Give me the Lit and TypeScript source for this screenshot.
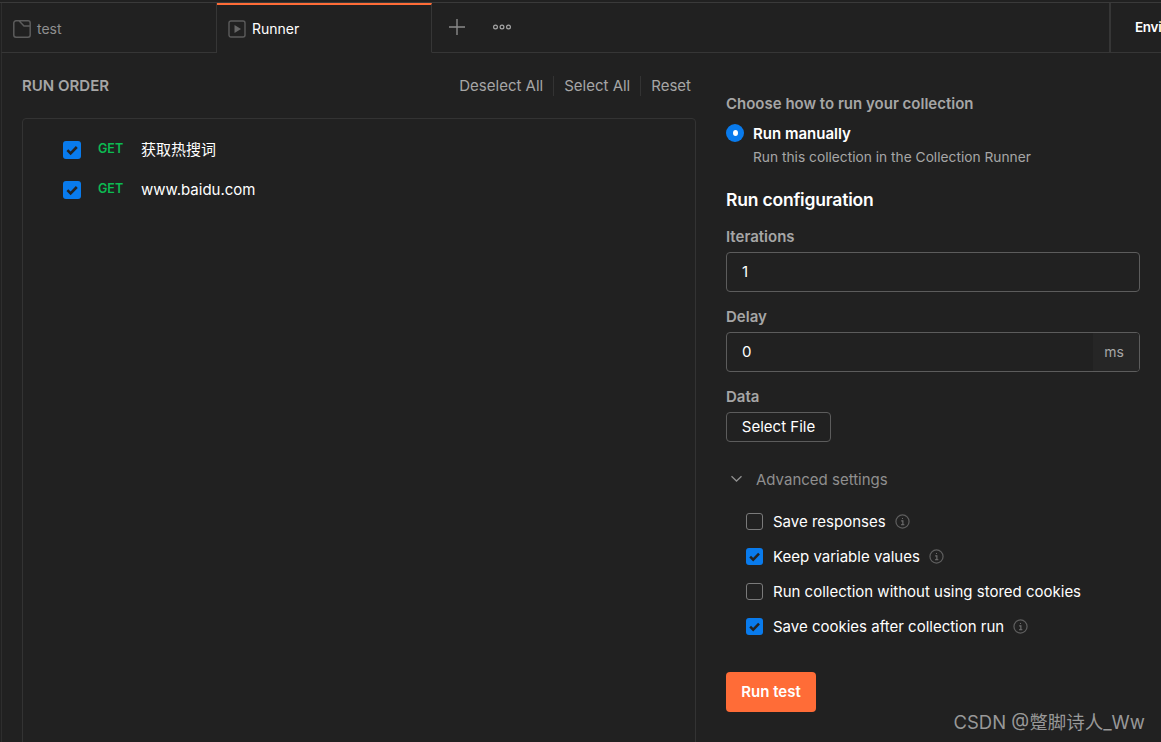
import { LitElement, html, css } from "lit";
import { customElement } from "lit/decorators.js";

const check = html`<svg viewBox="0 0 18 18" width="18" height="18"><path d="M4.4 9.2 7.6 12.4 13.8 6" fill="none" stroke="#232323" stroke-width="2.6"/></svg>`;
const info = html`<svg class="info" viewBox="0 0 16 16" width="15" height="15"><circle cx="8" cy="8" r="7" fill="none" stroke="#5e5e5e" stroke-width="1.3"/><path d="M6.6 7.3H8.4V11.2M6.4 11.4H10M7.5 4.8H8.5" fill="none" stroke="#707070" stroke-width="1.2"/></svg>`;

@customElement("app-root")
export class AppRoot extends LitElement {
  static styles = css`
    :host {
      display: block;
      width: 1161px;
      height: 742px;
      overflow: hidden;
      position: relative;
      background: #212121;
      color: #fff;
      font-family: Inter, "Noto Sans CJK SC", sans-serif;
      font-size: 15px;
      box-sizing: border-box;
      padding-top: 2px;
    }
    .topline { height: 1px; background: #3a3a3a; }
    .tabs {
      display: flex;
      height: 50px;
      box-sizing: border-box;
      padding-left: 1px;
    }
    .tab {
      display: flex;
      align-items: center;
      gap: 6px;
      box-sizing: border-box;
      height: 50px;
      border-bottom: 1px solid #363636;
      border-right: 1px solid #363636;
      padding-top: 3px;
      color: #8f8f8f;
      font-size: 14px;
      flex: none;
    }
    .tab svg { flex: none; }
    .tab span { padding-bottom: 2px; }
    .tab.first { width: 216px; padding-left: 11px; border-left: 1px solid #2e2e2e; }
    .tab.active {
      width: 215px;
      padding-left: 11px;
      color: #fff;
      border-bottom-color: transparent;
      border-top: 2px solid #ff6c37;
      padding-top: 1px;
    }
    .rest {
      flex: 1;
      display: flex;
      align-items: center;
      height: 50px;
      box-sizing: border-box;
      border-bottom: 1px solid #363636;
      padding-bottom: 1px;
    }
    .plus { margin-left: 17px; flex: none; }
    .dots { margin-left: 28px; flex: none; }
    .env {
      margin-left: auto;
      width: 52px;
      height: 49px;
      margin-bottom: -1px;
      box-sizing: border-box;
      border-left: 2px solid #363636;
      padding-left: 24px;
      padding-bottom: 2px;
      display: flex;
      align-items: center;
      font-weight: 600;
      font-size: 13.5px;
      letter-spacing: -0.3px;
      white-space: nowrap;
      flex: none;
    }
    .body {
      display: flex;
      height: 689px;
      margin-left: 1px;
      border-left: 1px solid #2e2e2e;
      box-sizing: border-box;
    }
    .left {
      width: 674px;
      margin-left: 20px;
      display: flex;
      flex-direction: column;
      flex: none;
    }
    .left-head {
      height: 65px;
      flex: none;
      display: flex;
      align-items: center;
      justify-content: space-between;
      box-sizing: border-box;
      padding-top: 1px;
    }
    .title { font-size: 15px; font-weight: 600; color: #a6a6a6; margin-bottom: 2px; }
    .actions { display: flex; align-items: center; color: #a6a6a6; font-size: 15px; }
    .actions span { padding: 0 10px; border-right: 1px solid #333; line-height: 20px; }
    .actions span:first-child { padding-left: 0; }
    .actions span:last-child { border: none; padding-right: 5px; }
    .card {
      height: 700px;
      flex: none;
      box-sizing: border-box;
      border: 1px solid #333;
      border-radius: 4px;
      padding: 11px 0 0 40px;
    }
    .row { display: flex; align-items: center; height: 40px; }
    .method {
      color: #0cbb52;
      font-size: 12.5px;
      font-weight: 600;
      width: 43px;
      margin-left: 17px;
      position: relative;
      top: -2px;
    }
    .name { font-size: 15px; padding-bottom: 2px; }
    .name.cjk { padding-bottom: 4px; }
    .right {
      width: 414px;
      margin-left: 30px;
      flex: none;
      padding-top: 41px;
      box-sizing: border-box;
    }
    .label { font-size: 15px; font-weight: 600; color: #a6a6a6; line-height: 20px; height: 20px; }
    .radio { display: flex; align-items: center; gap: 9px; margin-top: 9px; height: 20px; font-weight: 600; }
    .dot {
      width: 18px; height: 18px; border-radius: 50%; background: #097bed;
      display: flex; align-items: center; justify-content: center; flex: none;
    }
    .dot i { width: 5px; height: 6px; border-radius: 50%; background: #fff; display: block; }
    .sub { margin: 4px 0 0 27px; color: #a6a6a6; line-height: 20px; font-size: 13.75px; }
    h2 { margin: 21px 0 0; font-size: 17.5px; font-weight: 600; line-height: 24px; letter-spacing: -0.2px; }
    .lab-it { margin-top: 15px; }
    .field {
      margin-top: 5px;
      height: 40px;
      box-sizing: border-box;
      border: 1px solid #5c5c5c;
      border-radius: 4px;
      display: flex;
      align-items: center;
      padding-left: 15px;
      font-size: 15px;
      color: #fff;
      overflow: hidden;
    }
    .val { flex: 1; padding-bottom: 2px; }
    .unit {
      align-self: stretch;
      width: 46px;
      box-sizing: border-box;
      padding-right: 4px;
      padding-bottom: 1px;
      background: #262626;
      color: #a6a6a6;
      display: flex;
      align-items: center;
      justify-content: center;
      font-size: 14px;
    }
    .lab-gap { margin-top: 15px; }
    .file {
      margin-top: 5px;
      width: 105px;
      height: 30px;
      box-sizing: border-box;
      border: 1px solid #5c5c5c;
      border-radius: 4px;
      display: flex;
      align-items: center;
      justify-content: center;
      padding-bottom: 1px;
      font-size: 15px;
      color: #fff;
    }
    .adv {
      display: flex; align-items: center; gap: 13px;
      margin-top: 27px; height: 20px; color: #8f8f8f; font-size: 15px; padding-left: 4px;
    }
    .checks { margin: 15px 0 0 20px; }
    .opt { display: flex; align-items: center; height: 35px; font-size: 15px; }
    .box {
      width: 17px; height: 17px; box-sizing: border-box; border: 1px solid #7a7a7a; border-radius: 3px; flex: none; margin-right: 10px;
    }
    .cb { width: 18px; height: 18px; background: #097bed; border-radius: 3px; flex: none; display: block; }
    .opt .cb { width: 17px; height: 17px; margin-right: 10px; }
    .opt .cb svg { width: 17px; height: 17px; display: block; }
    .cb svg { display: block; }
    .info { margin-left: 9px; flex: none; }
    .run {
      margin-top: 28px;
      width: 90px;
      height: 40px;
      box-sizing: border-box;
      padding-bottom: 1px;
      border-radius: 4px;
      background: #ff6c37;
      display: flex;
      align-items: center;
      justify-content: center;
      font-weight: 600;
      font-size: 15px;
      color: #fff;
    }
    .mark {
      position: absolute;
      right: 16px;
      top: 709px;
      font-size: 18.5px;
      line-height: 26px;
      color: rgba(200, 200, 200, 0.72);
      white-space: nowrap;
    }
  `;

  render() {
    return html`
      <div class="topline"></div>
      <div class="tabs">
        <div class="tab first">
          <svg width="18" height="18" viewBox="1 1 18 18"><path d="M7 1.8 12 7 H18 M4 1.8H16A2.2 2.2 0 0 1 18.2 4V16A2.2 2.2 0 0 1 16 18.2H4A2.2 2.2 0 0 1 1.8 16V4A2.2 2.2 0 0 1 4 1.8Z" fill="none" stroke="#5c5c5c" stroke-width="1.5"/></svg>
          <span>test</span>
        </div>
        <div class="tab active">
          <svg width="18" height="18" viewBox="0 0 18 18"><rect x="1" y="1" width="16" height="16" rx="2" fill="none" stroke="#5c5c5c" stroke-width="1.4"/><path d="M6.5 5 13 9 6.5 13Z" fill="#666"/></svg>
          <span>Runner</span>
        </div>
        <div class="rest">
          <svg class="plus" width="16" height="16" viewBox="0 0 16 16"><path d="M8 0V16M0 8H16" stroke="#8a8a8a" stroke-width="1.4"/></svg>
          <svg class="dots" width="18" height="6" viewBox="0 0 18 6"><g fill="none" stroke="#a6a6a6" stroke-width="1.2"><circle cx="2.5" cy="3" r="1.9"/><circle cx="9" cy="3" r="1.9"/><circle cx="15.5" cy="3" r="1.9"/></g></svg>
          <div class="env">Envi</div>
        </div>
      </div>
      <div class="body">
        <section class="left">
          <div class="left-head">
            <div class="title">RUN ORDER</div>
            <div class="actions"><span>Deselect All</span><span>Select All</span><span>Reset</span></div>
          </div>
          <div class="card">
            <div class="row"><span class="cb">${check}</span><span class="method">GET</span><span class="name cjk">获取热搜词</span></div>
            <div class="row"><span class="cb">${check}</span><span class="method">GET</span><span class="name">www.baidu.com</span></div>
          </div>
        </section>
        <section class="right">
          <div class="label">Choose how to run your collection</div>
          <div class="radio"><span class="dot"><i></i></span><span>Run manually</span></div>
          <div class="sub">Run this collection in the Collection Runner</div>
          <h2>Run configuration</h2>
          <div class="label lab-it">Iterations</div>
          <div class="field"><span class="val">1</span></div>
          <div class="label lab-gap">Delay</div>
          <div class="field"><span class="val">0</span><span class="unit">ms</span></div>
          <div class="label lab-gap">Data</div>
          <div class="file">Select File</div>
          <div class="adv">
            <svg width="13" height="8" viewBox="0 0 13 8"><path d="M1.5 1.2 6.5 6 11.5 1.2" fill="none" stroke="#8f8f8f" stroke-width="1.3"/></svg>
            <span>Advanced settings</span>
          </div>
          <div class="checks">
            <div class="opt"><span class="box"></span>Save responses${info}</div>
            <div class="opt"><span class="cb">${check}</span>Keep variable values${info}</div>
            <div class="opt"><span class="box"></span>Run collection without using stored cookies</div>
            <div class="opt"><span class="cb">${check}</span>Save cookies after collection run${info}</div>
          </div>
          <div class="run">Run test</div>
        </section>
      </div>
      <div class="mark">CSDN @蹩脚诗人_Ww</div>
    `;
  }
}
